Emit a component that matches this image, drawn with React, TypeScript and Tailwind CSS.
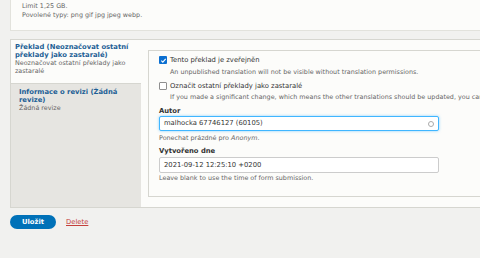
import React from "react";

function Checkbox(props: { checked: boolean }) {
  return props.checked ? (
    <span className="inline-flex h-[8px] w-[8px] shrink-0 items-center justify-center rounded-[1px] bg-[#0b6fd1]">
      <svg viewBox="0 0 8 8" className="h-[7px] w-[7px]">
        <path d="M1.5 4.2 L3.2 5.8 L6.5 2.2" fill="none" stroke="#fff" strokeWidth="1.3" />
      </svg>
    </span>
  ) : (
    <span className="inline-block h-[8px] w-[8px] shrink-0 rounded-[1px] border border-[#8f8f8f] bg-white"></span>
  );
}

export default function App() {
  return (
    <div className="h-[258px] w-[480px] overflow-hidden bg-[#f1f1ef] font-['DejaVu_Sans',sans-serif] text-[#333]">
      <div className="ml-[10px] h-[31px] border border-t-0 border-r-0 border-[#e2e2dc] bg-[#fcfcfa] pl-[11px] pt-[2px] text-[6.4px] leading-[9px] text-[#666]">
        <div>Limit 1,25 GB.</div>
        <div>Povolené typy: png gif jpg jpeg webp.</div>
      </div>

      <div className="ml-[10px] mt-[8px] flex h-[169px] border border-r-0 border-[#d6d6d0]">
        <div className="flex w-[130px] shrink-0 flex-col bg-[#e6e5e1]">
          <div className="h-[44px] border-b border-[#d6d6d0] bg-[#fcfcfa] pl-[4px] pr-[6px] pt-[3px] leading-[8px]">
            <div className="text-[6.8px] font-bold text-[#1d5f95]">Překlad (Neoznačovat ostatní překlady jako zastaralé)</div>
            <div className="text-[6.4px] text-[#666]">Neoznačovat ostatní překlady jako zastaralé</div>
          </div>
          <div className="pl-[8px] pr-[8px] pt-[4px] leading-[8px]">
            <div className="text-[6.8px] font-bold text-[#1d5f95]">Informace o revizi (Žádná revize)</div>
            <div className="text-[6.4px] text-[#666]">Žádná revize</div>
          </div>
        </div>
        <div className="min-w-0 flex-1 bg-[#fcfcfa] pl-[7px] pt-[10px]">
          <div className="h-[147px] overflow-hidden border border-r-0 border-[#d6d6d0] bg-[#fcfcfa] pl-[10px] pt-[4px]">
            <div className="flex items-center gap-[3px] text-[6.8px] leading-[10px]">
              <Checkbox checked={true} />
              <span>Tento překlad je zveřejněn</span>
            </div>
            <div className="mt-[2px] whitespace-nowrap pl-[11px] text-[6.4px] leading-[10px] text-[#666]">
              An unpublished translation will not be visible without translation permissions.
            </div>
            <div className="mt-[4px] flex items-center gap-[3px] text-[6.8px] leading-[10px]">
              <Checkbox checked={false} />
              <span>Označit ostatní překlady jako zastaralé</span>
            </div>
            <div className="mt-[1px] whitespace-nowrap pl-[11px] text-[6.4px] leading-[10px] text-[#666]">
              If you made a significant change, which means the other translations should be updated, you can
            </div>
            <div className="mt-[4px] text-[6.8px] font-bold leading-[10px]">Autor</div>
            <div className="flex h-[15px] w-[280px] items-center justify-between rounded-[2px] border border-[#40b6ff] bg-white pl-[4px] pr-[4px] text-[6.8px] shadow-[0_0_3px_rgba(64,182,255,0.6)]">
              <span>malhocka 67746127 (60105)</span>
              <span className="h-[6px] w-[6px] rounded-full border border-[#aaa]"></span>
            </div>
            <div className="mt-[2px] text-[6.4px] leading-[10px] text-[#666]">
              Ponechat prázdné pro <em>Anonym</em>.
            </div>
            <div className="mt-[3px] text-[6.8px] font-bold leading-[10px]">Vytvořeno dne</div>
            <div className="mt-[1px] flex h-[16px] w-[280px] items-center rounded-[2px] border border-[#ccc] bg-white pl-[4px] text-[6.8px]">
              2021-09-12 12:25:10 +0200
            </div>
            <div className="text-[6.4px] leading-[10px] text-[#666]">
              Leave blank to use the time of form submission.
            </div>
          </div>
        </div>
      </div>

      <div className="ml-[10px] mt-[7px] flex items-center gap-[10px]">
        <button className="h-[14px] w-[46px] rounded-full bg-[#0071b8] text-[6.8px] font-bold text-white">Uložit</button>
        <a className="text-[6.8px] text-[#c4403b] underline">Delete</a>
      </div>
    </div>
  );
}
